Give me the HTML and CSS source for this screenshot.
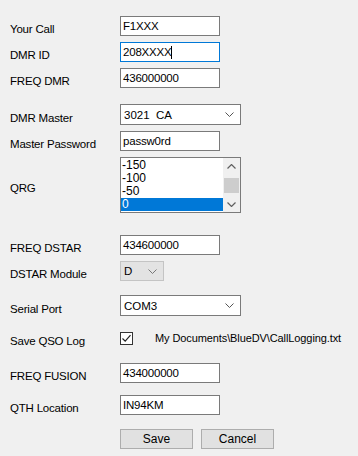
FILE: index.html
```html
<!DOCTYPE html>
<html lang="en">
<head>
    <meta charset="UTF-8">
    <title>BlueDV Settings</title>
    <link rel="stylesheet" href="styles.css">
</head>
<body>
    <div class="settings">
        <div class="row row-first">
            <span class="label">Your Call</span>
            <div class="field">F1XXX</div>
        </div>
        <div class="row">
            <span class="label">DMR ID</span>
            <div class="field focused">208XXXX<span class="caret"></span></div>
        </div>
        <div class="row">
            <span class="label">FREQ DMR</span>
            <div class="field">436000000</div>
        </div>

        <div class="row gap-16">
            <span class="label">DMR Master</span>
            <div class="combo">
                <span>3021&nbsp; CA</span>
                <svg class="chevron" width="9" height="5" viewBox="0 0 9 5"><path d="M0.5 0.5 L4.5 4.5 L8.5 0.5" fill="none" stroke="#555" stroke-width="1"/></svg>
            </div>
        </div>
        <div class="row">
            <span class="label">Master Password</span>
            <div class="field">passw0rd</div>
        </div>
        <div class="row">
            <span class="label">QRG</span>
            <div class="listbox">
                <div class="items">
                    <div class="item">-150</div>
                    <div class="item">-100</div>
                    <div class="item">-50</div>
                    <div class="item selected">0</div>
                </div>
                <div class="scrollbar">
                    <svg width="9" height="5" viewBox="0 0 9 5"><path d="M0.5 4.5 L4.5 0.5 L8.5 4.5" fill="none" stroke="#606060" stroke-width="1.2"/></svg>
                    <div class="thumb"></div>
                    <svg width="9" height="5" viewBox="0 0 9 5"><path d="M0.5 0.5 L4.5 4.5 L8.5 0.5" fill="none" stroke="#606060" stroke-width="1.2"/></svg>
                </div>
            </div>
        </div>

        <div class="row gap-22">
            <span class="label">FREQ DSTAR</span>
            <div class="field">434600000</div>
        </div>
        <div class="row">
            <span class="label">DSTAR Module</span>
            <div class="combo combo-small disabled">
                <span>D</span>
                <svg class="chevron" width="9" height="5" viewBox="0 0 9 5"><path d="M0.5 0.5 L4.5 4.5 L8.5 0.5" fill="none" stroke="#777" stroke-width="1"/></svg>
            </div>
        </div>
        <div class="row gap-14">
            <span class="label">Serial Port</span>
            <div class="combo">
                <span>COM3</span>
                <svg class="chevron" width="9" height="5" viewBox="0 0 9 5"><path d="M0.5 0.5 L4.5 4.5 L8.5 0.5" fill="none" stroke="#555" stroke-width="1"/></svg>
            </div>
        </div>
        <div class="row gap-13 row-check">
            <span class="label">Save QSO Log</span>
            <div class="checkbox">
                <svg width="11" height="11" viewBox="0 0 11 11"><path d="M1.5 5.5 L4.2 8.2 L9.5 2.2" fill="none" stroke="#222" stroke-width="1.2"/></svg>
            </div>
            <span class="path">My Documents\BlueDV\CallLogging.txt</span>
        </div>
        <div class="row gap-16">
            <span class="label">FREQ FUSION</span>
            <div class="field">434000000</div>
        </div>
        <div class="row gap-12">
            <span class="label">QTH Location</span>
            <div class="field">IN94KM</div>
        </div>

        <div class="buttons">
            <button>Save</button>
            <button>Cancel</button>
        </div>
    </div>
</body>
</html>
```

FILE: styles.css
```css
* {
    margin: 0;
    padding: 0;
    box-sizing: border-box;
}

body {
    background: #f0f0f0;
    color: #000;
    font-family: 'Liberation Sans', Arial, sans-serif;
    font-size: 11px;
}

.settings {
    display: flex;
    flex-direction: column;
    padding-top: 16px;
}

.row {
    display: flex;
    align-items: center;
    margin-top: 6px;
}

.row-first { margin-top: 0; }
.gap-12 { margin-top: 12px; }
.gap-13 { margin-top: 13px; }
.gap-14 { margin-top: 14px; }
.gap-16 { margin-top: 16px; }
.gap-22 { margin-top: 22px; }

/* labels sit a few px below the control centre, like WinForms */
.label {
    width: 120px;
    padding-left: 10px;
    padding-top: 6px;
    font-size: 11.5px;
    letter-spacing: -0.2px;
    white-space: nowrap;
}

.field {
    width: 100px;
    height: 20px;
    background: #fff;
    border: 1px solid #7a7a7a;
    padding-left: 2px;
    font-size: 11.5px;
    letter-spacing: -0.2px;
    display: flex;
    align-items: center;
}

.field.focused {
    border-color: #0078d7;
}

.caret {
    width: 1px;
    height: 13px;
    background: #000;
}

.combo {
    width: 121px;
    height: 21px;
    background: #fff;
    border: 1px solid #7a7a7a;
    padding: 0 6px 0 3px;
    font-size: 11.5px;
    display: flex;
    align-items: center;
    justify-content: space-between;
}

.combo-small {
    width: 44px;
    height: 20px;
}

.combo.disabled {
    background: #e3e3e3;
    border-color: #c4c4c4;
}

.listbox {
    width: 121px;
    height: 56px;
    background: #fff;
    border: 1px solid #7a7a7a;
    display: flex;
}

.items {
    flex: 1;
    padding-top: 1px;
    font-size: 12px;
}

.item {
    height: 13px;
    line-height: 13px;
    padding-left: 1px;
}

.item.selected {
    background: #0078d7;
    color: #fff;
}

.scrollbar {
    width: 17px;
    background: #f0f0f0;
    display: flex;
    flex-direction: column;
    align-items: center;
    justify-content: space-between;
    padding: 6px 0 5px;
}

.thumb {
    width: 15px;
    height: 15px;
    background: #cdcdcd;
}

.checkbox {
    width: 13px;
    height: 13px;
    background: #fff;
    border: 1px solid #333;
    display: flex;
    align-items: center;
    justify-content: center;
}

.path {
    margin-left: 22px;
    font-size: 11px;
    letter-spacing: -0.1px;
}

.buttons {
    display: flex;
    gap: 8px;
    margin-top: 14px;
    padding-left: 120px;
}

button {
    width: 73px;
    height: 20px;
    background: #e1e1e1;
    border: 1px solid #adadad;
    font-family: 'Liberation Sans', Arial, sans-serif;
    font-size: 12px;
    color: #000;
}
```
